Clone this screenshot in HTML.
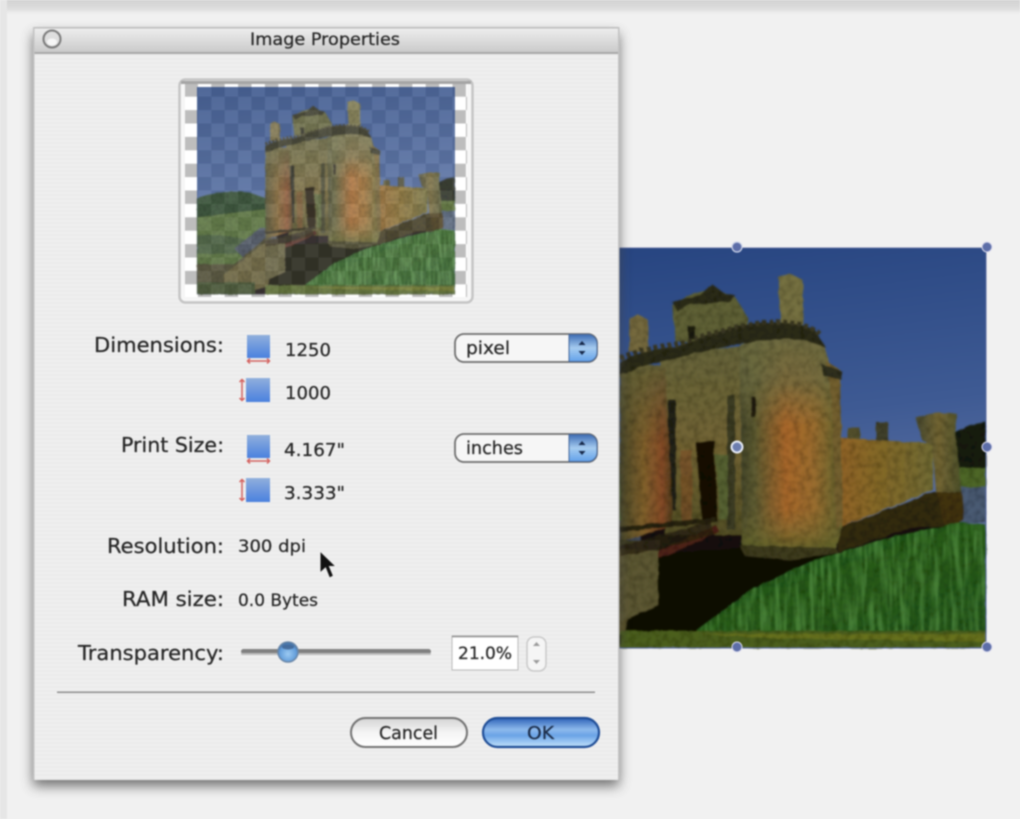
<!DOCTYPE html>
<html><head><meta charset="utf-8"><title>Image Properties</title>
<style>
html,body{margin:0;padding:0;background:#f1f1f1;width:1020px;height:819px;overflow:hidden}
svg{display:block;filter:blur(.75px)}
text{font-family:"DejaVu Sans","Liberation Sans",sans-serif;fill:#262626;stroke:#262626;stroke-width:.25px}
</style></head><body>
<svg xmlns="http://www.w3.org/2000/svg" width="1020" height="819" viewBox="0 0 1020 819">
<defs>
<linearGradient id="sky" x1="0" y1="0" x2=".15" y2="1"><stop offset="0" stop-color="#25437f"/><stop offset=".5" stop-color="#3e5a93"/><stop offset="1" stop-color="#7482ad"/></linearGradient>
<linearGradient id="tower" x1="0" y1="0" x2="1" y2="0"><stop offset="0" stop-color="#3f4128"/><stop offset=".14" stop-color="#5c5a30"/><stop offset=".45" stop-color="#a8662a"/><stop offset=".72" stop-color="#9a6c2d"/><stop offset=".9" stop-color="#74662e"/><stop offset="1" stop-color="#5e5b2c"/></linearGradient>
<linearGradient id="towerv" x1="0" y1="0" x2="0" y2="1"><stop offset="0" stop-color="#6c6b40" stop-opacity=".98"/><stop offset=".22" stop-color="#6c6b40" stop-opacity=".75"/><stop offset=".42" stop-color="#77703f" stop-opacity="0"/><stop offset=".8" stop-color="#7a6f35" stop-opacity=".05"/><stop offset="1" stop-color="#5c6028" stop-opacity=".95"/></linearGradient>
<linearGradient id="ltower" x1="0" y1="0" x2="1" y2="0"><stop offset="0" stop-color="#4a4826"/><stop offset=".45" stop-color="#80602c"/><stop offset=".8" stop-color="#844a26"/><stop offset="1" stop-color="#4e3e1c"/></linearGradient>
<linearGradient id="ltowerv" x1="0" y1="0" x2="0" y2="1"><stop offset="0" stop-color="#625f35" stop-opacity=".95"/><stop offset=".45" stop-color="#5d5a32" stop-opacity="0"/></linearGradient>
<linearGradient id="wall" x1="0" y1="0" x2="1" y2="0"><stop offset="0" stop-color="#926428"/><stop offset=".5" stop-color="#806828"/><stop offset="1" stop-color="#706a33"/></linearGradient>
<linearGradient id="gate" x1="0" y1="0" x2="0" y2="1"><stop offset="0" stop-color="#646238"/><stop offset=".55" stop-color="#726433"/><stop offset="1" stop-color="#524e24"/></linearGradient>
<linearGradient id="far" x1="0" y1="0" x2="1" y2="0"><stop offset="0" stop-color="#4a4b30"/><stop offset=".5" stop-color="#726533"/><stop offset="1" stop-color="#4c502a"/></linearGradient>
<linearGradient id="grass" x1="0" y1="0" x2="1" y2="1"><stop offset="0" stop-color="#16400f"/><stop offset=".5" stop-color="#265a18"/><stop offset="1" stop-color="#225016"/></linearGradient>
<linearGradient id="bar" x1="0" y1="0" x2="0" y2="1"><stop offset="0" stop-color="#efefef"/><stop offset="1" stop-color="#c9c9c9"/></linearGradient>
<linearGradient id="blue" x1="0" y1="0" x2="0" y2="1"><stop offset="0" stop-color="#3d6cb4"/><stop offset=".5" stop-color="#a5cbef"/><stop offset="1" stop-color="#63a2ea"/></linearGradient>
<linearGradient id="ok" x1="0" y1="0" x2="0" y2="1"><stop offset="0" stop-color="#2e63b8"/><stop offset=".4" stop-color="#8db9ec"/><stop offset=".6" stop-color="#6aa3e6"/><stop offset="1" stop-color="#c2e2fb"/></linearGradient>
<linearGradient id="btn" x1="0" y1="0" x2="0" y2="1"><stop offset="0" stop-color="#d4d4d4"/><stop offset=".5" stop-color="#f4f4f4"/><stop offset="1" stop-color="#ffffff"/></linearGradient>
<linearGradient id="ico" x1="0" y1="0" x2="0" y2="1"><stop offset="0" stop-color="#90afdc"/><stop offset="1" stop-color="#4a80de"/></linearGradient>
<linearGradient id="topfade" x1="0" y1="0" x2="0" y2="1"><stop offset="0" stop-color="#d2d2d2"/><stop offset=".6" stop-color="#dcdcdc"/><stop offset="1" stop-color="#f1f1f1"/></linearGradient>
<radialGradient id="knob" cx=".5" cy=".6" r=".55"><stop offset="0" stop-color="#9ccaf2"/><stop offset=".8" stop-color="#5f9ad8"/><stop offset="1" stop-color="#3f6a9c"/></radialGradient>
<pattern id="stripes" width="4" height="4" patternUnits="userSpaceOnUse"><rect width="4" height="2" fill="#f0f0f0"/><rect y="2" width="4" height="2" fill="#ebebeb"/></pattern>
<pattern id="check" x="184.5" y="83.3" width="26.8" height="26.8" patternUnits="userSpaceOnUse"><rect width="26.8" height="26.8" fill="#fff"/><rect width="13.4" height="13.4" fill="#bdbdbd"/><rect x="13.4" y="13.4" width="13.4" height="13.4" fill="#bdbdbd"/></pattern>
<filter id="rough" x="-2%" y="-2%" width="104%" height="104%">
 <feTurbulence type="fractalNoise" baseFrequency=".09" numOctaves="3" seed="4" result="n"/>
 <feDisplacementMap in="SourceGraphic" in2="n" scale="3" result="d"/>
 <feTurbulence type="fractalNoise" baseFrequency=".16" numOctaves="2" seed="9" result="g"/>
 <feColorMatrix in="g" type="matrix" values="0 0 0 0 0  0 0 0 0 0  0 0 0 0 0  .9 0 0 0 -.33" result="ga"/>
 <feComposite in="ga" in2="d" operator="atop" result="t"/>
 <feGaussianBlur in="t" stdDeviation=".85"/>
</filter>
<filter id="blades" x="0" y="0" width="100%" height="100%">
 <feTurbulence type="fractalNoise" baseFrequency=".2 .025" numOctaves="2" seed="3"/>
 <feColorMatrix type="matrix" values="0 0 0 0 .12  0 0 0 0 .35  0 0 0 0 .08  3 0 0 0 -1.2"/>
 <feComposite in2="SourceGraphic" operator="in"/>
 <feGaussianBlur stdDeviation=".8"/>
</filter>
<filter id="shadow" x="-10%" y="-10%" width="120%" height="120%"><feGaussianBlur stdDeviation="6"/></filter>
<g id="castle">
 <rect x="488" y="248" width="498" height="400" fill="url(#sky)"/>
 <g filter="url(#rough)">
 <rect x="488" y="525" width="498" height="123" fill="#16100a"/>
 <!-- left hills hidden behind dialog -->
 <path d="M488 462Q540 445 590 452L640 470V520H488Z" fill="#1e3a1b"/>
 <path d="M488 500Q560 490 640 482V600H488Z" fill="#4a662a"/>
 <path d="M488 535Q540 530 590 545L640 520V570H488Z" fill="#34502a"/>
 <path d="M560 560L610 520H640V560L590 590Z" fill="#3d4656"/>
 <path d="M488 590H560L620 540H660V625H488Z" fill="#403d24"/>
 <path d="M540 610L620 548L660 552V622L600 640H540Z" fill="#5d552c"/>
 <path d="M488 625H600V648H488Z" fill="#33431d"/>
 <!-- distant trees, water -->
 <path d="M955 470V432L970 425L986 422V470Z" fill="#141f10"/>
 <rect x="955" y="468" width="31" height="20" fill="#4e6626"/>
 <rect x="940" y="487" width="46" height="36" fill="#4a5a72"/>
 <!-- far battlements -->
 <rect x="848" y="428" width="12" height="14" fill="#55512f"/>
 <rect x="876" y="422" width="12" height="20" fill="#3f3f2a"/>
 <!-- right wall -->
 <path d="M838 438L933 443V490L838 528Z" fill="url(#wall)"/>
 <path d="M838 528L933 492L960 490V525L910 528L838 552Z" fill="#32290f"/>
 <!-- far tower -->
 <path d="M916 418Q938 410 957 414L955 430L962 492H936L932 445L922 440Z" fill="url(#far)"/>
 <path d="M936 492H962L964 520L945 527Z" fill="#40300f"/>
 <!-- chimney -->
 <path d="M778 277L789 273L803 280V325H781Z" fill="#75703f"/>
 <!-- upper turret -->
 <path d="M672 305L690 295L714 288L736 298L748 318L745 342H676Z" fill="#5f6136"/>
 <path d="M672 302L700 295L712 284L724 293L736 296L728 302L690 304L678 312Z" fill="#2a2a18"/>
 <rect x="688" y="326" width="7" height="13" fill="#1e1a0f"/>
 <!-- small left chimney -->
 <path d="M630 318L637 314L648 320V352H629Z" fill="#74693c"/>
 <!-- middle wall -->
 <path d="M660 355L745 345V535H665Z" fill="url(#gate)"/>
 <path d="M668 400H676V510H668Z" fill="#242012"/>
 <path d="M727 395H735V530H727Z" fill="#3a3a22"/>
 <path d="M696 443L714 440L718 522L702 525Z" fill="#170e06"/>
 <path d="M715 455H728V520H720Z" fill="#566230"/>
 <path d="M680 450H692V525H682Z" fill="#7a4e26" opacity=".7"/>
 <!-- left tower -->
 <path d="M620 365H665L673 525L625 540H620Z" fill="url(#ltower)"/>
 <path d="M620 365H665L673 525L625 540H620Z" fill="url(#ltowerv)"/>
 <!-- main tower -->
 <path d="M740 345Q790 325 824 345L838 395L842 528L836 548L770 552L742 548Z" fill="url(#tower)"/>
 <path d="M740 345Q790 325 824 345L838 395L842 528L836 548L770 552L742 548Z" fill="url(#towerv)"/>
 <path d="M825 360L840 370L843 520L836 530L832 400Z" fill="#725f2e"/>
 <rect x="751" y="397" width="5" height="20" fill="#201c10"/>
 <!-- battlement -->
 <path d="M620 362Q640 350 680 346Q705 334 745 325Q790 318 815 330L826 348Q800 336 770 340Q720 345 680 358Q650 362 620 375Z" fill="#2c2a17"/>
 <path d="M620 358Q650 346 680 344Q720 329 760 323Q800 318 820 334" fill="none" stroke="#3a3720" stroke-width="5" stroke-dasharray="4 3"/>
 <path d="M823 366L840 372V378L824 374Z" fill="#2f2f1b" stroke="#2f2f1b" stroke-width="3"/>
 <!-- shadow -->
 <path d="M640 555L740 548L840 552L750 600L695 632L625 632Z" fill="#0e0805"/>
 <path d="M740 545L836 548L838 553L790 560L745 556Z" fill="#3e3a1a"/>
 <!-- bridge -->
 <path d="M620 555L660 550L716 525L720 532L665 556L620 566Z" fill="#4e2414"/>
 <path d="M620 530L660 525L716 520" fill="none" stroke="#28200f" stroke-width="5"/>
 <path d="M620 553L712 528" fill="none" stroke="#28200f" stroke-width="14" opacity=".75"/>
 <!-- stone -->
 <path d="M620 556L658 550V605L620 622Z" fill="#5c5730"/>
 <!-- grass -->
 <path d="M697 630L750 590L810 562L880 540L960 522L986 525V634H697Z" fill="url(#grass)"/>
 <!-- front bank -->
 <path d="M620 631H986V648H620Z" fill="#4c5f1b"/>
 <path d="M700 634H986V642L760 638Z" fill="#66711f"/>
 </g>
 <path d="M697 630L750 590L810 562L880 540L960 522L986 525V631H697Z" fill="#000" filter="url(#blades)" opacity=".55"/>
</g>
</defs>

<!-- backdrop -->
<rect width="1020" height="819" fill="#f1f1f1"/>
<rect width="1020" height="14" fill="url(#topfade)"/>
<rect width="7" height="819" fill="#e6e6e6"/>

<!-- main picture -->
<use href="#castle"/>
<rect x="488" y="248" width="498" height="400" fill="none" stroke="#5b6ca0" stroke-width="1"/>
<g>
 <circle cx="737" cy="247" r="5" fill="#5d6ea8" stroke="#cfd6ea" stroke-width="1.2"/>
 <circle cx="987" cy="247" r="5" fill="#5d6ea8" stroke="#dde" stroke-width="1"/>
 <circle cx="737" cy="447" r="5.5" fill="#6d7eaf" stroke="#e6ebf5" stroke-width="2"/>
 <circle cx="987" cy="447" r="5" fill="#5d6ea8" stroke="#dde" stroke-width="1"/>
 <circle cx="737" cy="647" r="5" fill="#5d6ea8" stroke="#dde" stroke-width="1"/>
 <circle cx="987" cy="647" r="5" fill="#5d6ea8" stroke="#dde" stroke-width="1"/>
</g>

<!-- dialog -->
<rect x="33" y="34" width="586" height="752" fill="#444" opacity=".75" filter="url(#shadow)"/>
<rect x="33" y="27" width="586" height="753" fill="url(#stripes)"/>
<rect x="33" y="27" width="586" height="26" fill="url(#bar)"/>
<rect x="33" y="52" width="586" height="2" fill="#a8a8a8"/>
<rect x="33" y="27" width="586" height="1.5" fill="#bcbcbc"/>
<rect x="33" y="27" width="1.5" height="753" fill="#c2c2c2"/>
<rect x="618" y="27" width="1.5" height="753" fill="#c2c2c2"/>
<circle cx="52" cy="39" r="8.5" fill="#dedede" stroke="#7a7a7a" stroke-width="2"/>
<ellipse cx="52" cy="42" rx="5" ry="3.5" fill="#f6f6f6"/>
<text x="250" y="45" font-size="17" textLength="150" lengthAdjust="spacingAndGlyphs">Image Properties</text>

<!-- thumbnail -->
<rect x="179.500" y="79.500" width="293" height="223" rx="6" fill="#f6f6f6" stroke="#c4c4c4" stroke-width="2.500"/>
<rect x="185" y="83" width="282" height="214" fill="url(#check)"/>
<rect x="181" y="81" width="290" height="3" fill="#a4a4a4"/>
<g opacity=".8" transform="translate(197,87) scale(.518) translate(-488,-248)"><use href="#castle"/></g>

<!-- labels -->
<g font-size="20">
<text x="94" y="352" textLength="130" lengthAdjust="spacingAndGlyphs">Dimensions:</text>
<text x="121" y="452" textLength="103" lengthAdjust="spacingAndGlyphs">Print Size:</text>
<text x="107" y="553" textLength="117" lengthAdjust="spacingAndGlyphs">Resolution:</text>
<text x="122" y="606" textLength="102" lengthAdjust="spacingAndGlyphs">RAM size:</text>
<text x="78" y="660" textLength="146" lengthAdjust="spacingAndGlyphs">Transparency:</text>
</g>
<g font-size="18">
<text x="285" y="356" textLength="46" lengthAdjust="spacingAndGlyphs">1250</text>
<text x="285" y="399" textLength="46" lengthAdjust="spacingAndGlyphs">1000</text>
<text x="284" y="456" textLength="61" lengthAdjust="spacingAndGlyphs">4.167"</text>
<text x="284" y="499" textLength="61" lengthAdjust="spacingAndGlyphs">3.333"</text>
<text x="238" y="552" font-size="17" textLength="68" lengthAdjust="spacingAndGlyphs">300 dpi</text>
<text x="238" y="606" font-size="17" textLength="80" lengthAdjust="spacingAndGlyphs">0.0 Bytes</text>
</g>

<!-- size icons -->
<g>
 <rect x="247" y="335" width="23" height="23" fill="url(#ico)"/>
 <rect x="246" y="378" width="24" height="24" fill="url(#ico)"/>
 <rect x="247" y="435" width="23" height="23" fill="url(#ico)"/>
 <rect x="246" y="478" width="24" height="24" fill="url(#ico)"/>
 <g fill="none" stroke="#cf4a46" stroke-width="1.500" opacity=".85">
 <path d="M248 361H269M250 358.500l-2.500 2.500l2.500 2.500M267 358.500l2.500 2.500l-2.500 2.500"/>
 <path d="M242 380V400M239.500 382l2.500-2.500l2.500 2.500M239.500 398l2.500 2.500l2.500-2.500"/>
 <path d="M248 461H269M250 458.500l-2.500 2.500l2.500 2.500M267 458.500l2.500 2.500l-2.500 2.500"/>
 <path d="M242 480V500M239.500 482l2.500-2.500l2.500 2.500M239.500 498l2.500 2.500l2.500-2.500"/>
 </g>
</g>

<!-- popups -->
<g>
 <rect x="455" y="334" width="142" height="28" rx="9" fill="#f6f6f6" stroke="#6e6e6e" stroke-width="1.800"/>
 <path d="M569 334.500H588a9 9 0 0 1 9 9v9a9 9 0 0 1-9 9H569Z" fill="url(#blue)" stroke="#47689a" stroke-width="1"/>
 <path d="M578.500 345l3.500-4l3.500 4ZM578.500 351l3.500 4l3.500-4Z" fill="#16284a"/>
 <text x="466" y="354" font-size="18" textLength="44" lengthAdjust="spacingAndGlyphs">pixel</text>
 <rect x="455" y="434" width="142" height="28" rx="9" fill="#f6f6f6" stroke="#6e6e6e" stroke-width="1.800"/>
 <path d="M569 434.500H588a9 9 0 0 1 9 9v9a9 9 0 0 1-9 9H569Z" fill="url(#blue)" stroke="#47689a" stroke-width="1"/>
 <path d="M578.500 445l3.500-4l3.500 4ZM578.500 451l3.500 4l3.500-4Z" fill="#16284a"/>
 <text x="466" y="454" font-size="18" textLength="57" lengthAdjust="spacingAndGlyphs">inches</text>
</g>

<!-- slider -->
<rect x="241" y="649" width="190" height="5" rx="2.500" fill="#808080"/>
<rect x="241" y="653" width="190" height="2" rx="1" fill="#bdbdbd"/>
<circle cx="288" cy="652" r="10" fill="url(#knob)" stroke="#6a87a8" stroke-width="1.500"/>
<ellipse cx="288" cy="647" rx="6" ry="2.500" fill="#3d5f8c" opacity=".8"/>

<!-- number field -->
<rect x="452" y="636" width="66" height="34" fill="#fff" stroke="#b8b8b8" stroke-width="1"/>
<path d="M452 636.500H518" stroke="#8c8c8c" stroke-width="1.500"/>
<text x="458" y="659" font-size="17" textLength="54" lengthAdjust="spacingAndGlyphs">21.0%</text>
<rect x="527" y="637" width="19" height="34" rx="7" fill="#f5f5f5" stroke="#c8c8c8" stroke-width="1.500"/>
<path d="M533 646l3.500-4l3.500 4ZM533 660l3.500 4l3.500-4Z" fill="#9a9a9a"/>

<!-- divider -->
<rect x="57" y="691.500" width="538" height="1.500" fill="#8c8c8c"/>

<!-- buttons -->
<rect x="351" y="718" width="116" height="29" rx="14.500" fill="url(#btn)" stroke="#727272" stroke-width="2"/>
<text x="379" y="739" font-size="18" textLength="59" lengthAdjust="spacingAndGlyphs">Cancel</text>
<rect x="483" y="718" width="116" height="29" rx="14.500" fill="url(#ok)" stroke="#1f4d96" stroke-width="2.200"/>
<text x="527" y="739" font-size="18" textLength="27" lengthAdjust="spacingAndGlyphs" style="fill:#1b2c48;stroke:#1b2c48">OK</text>

<!-- cursor -->
<path d="M320 551V573L325.500 568L329.500 578L333.500 576L329.500 566.500H336Z" fill="#111" stroke="#eee" stroke-width="1"/>
</svg>
</body></html>
